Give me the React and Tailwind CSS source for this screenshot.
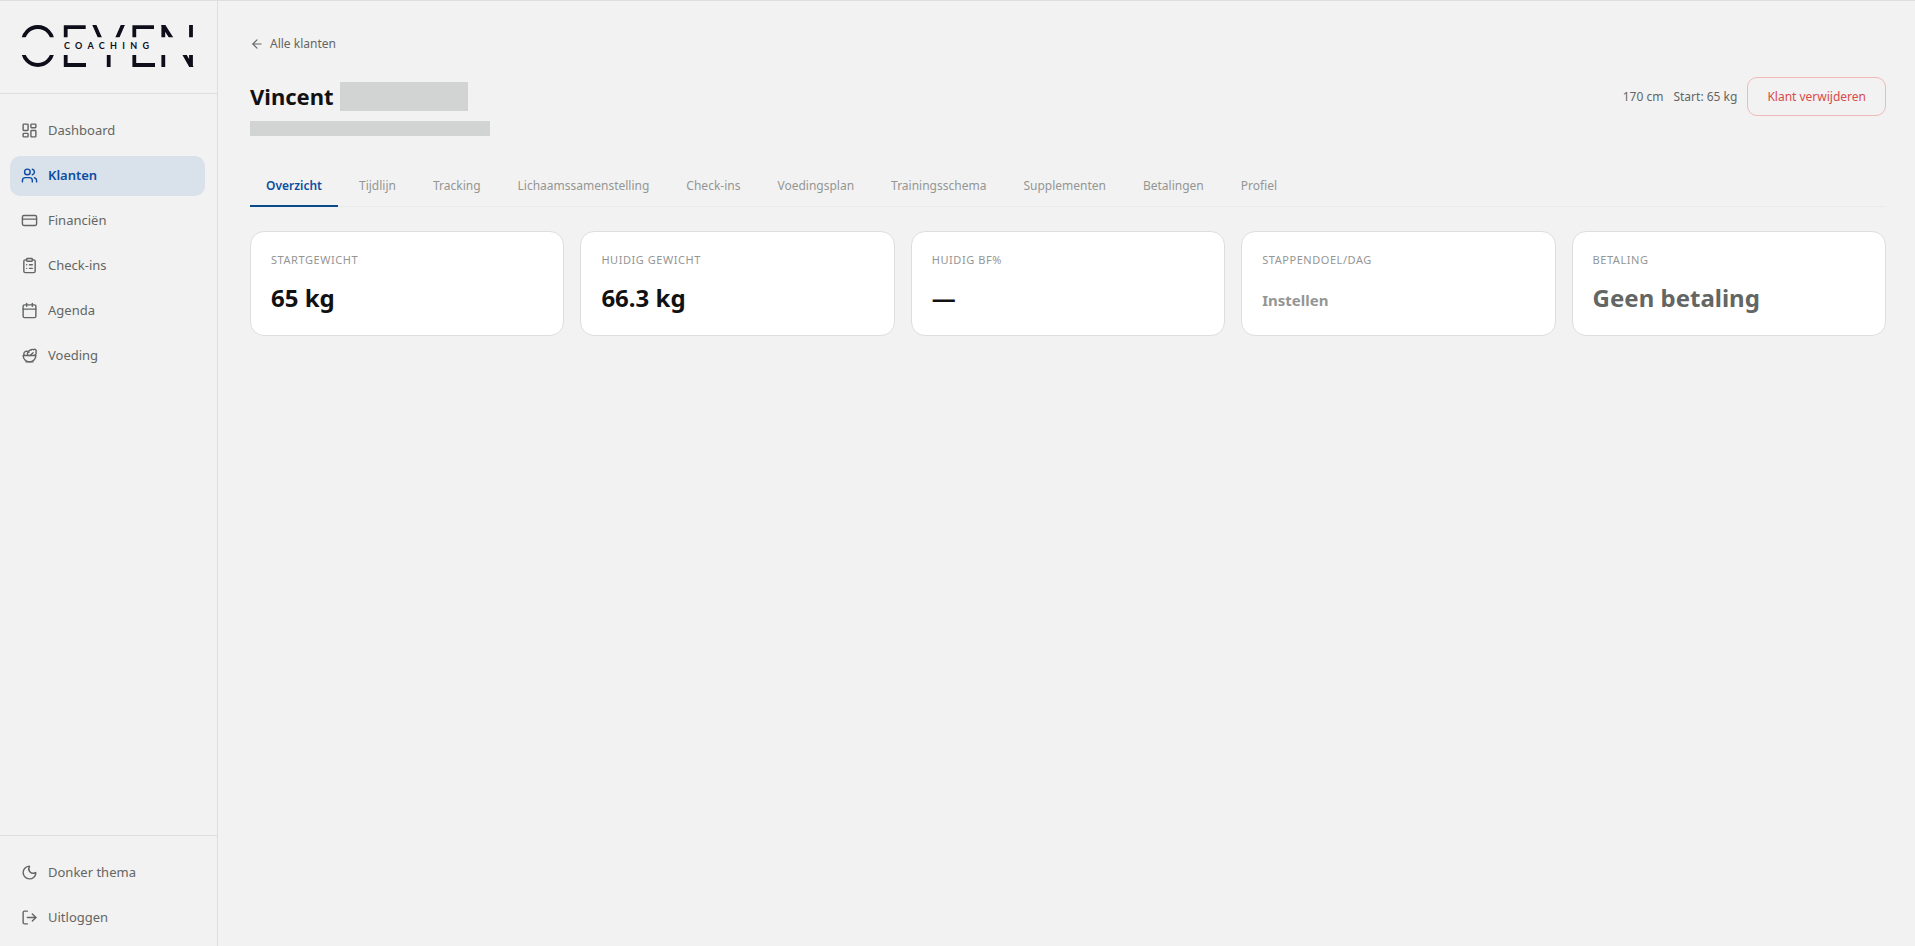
import React from 'react';
import {
  ArrowLeft,
  Calendar,
  ClipboardList,
  CreditCard,
  LayoutDashboard,
  LogOut,
  Moon,
  Salad,
  Users,
} from 'lucide-react';

const navItems = [
  { label: 'Dashboard', icon: LayoutDashboard },
  { label: 'Klanten', icon: Users, active: true },
  { label: 'Financiën', icon: CreditCard },
  { label: 'Check-ins', icon: ClipboardList },
  { label: 'Agenda', icon: Calendar },
  { label: 'Voeding', icon: Salad },
];

const tabs = [
  'Overzicht',
  'Tijdlijn',
  'Tracking',
  'Lichaamssamenstelling',
  'Check-ins',
  'Voedingsplan',
  'Trainingsschema',
  'Supplementen',
  'Betalingen',
  'Profiel',
];

const stats = [
  { label: 'Startgewicht', value: '65 kg' },
  { label: 'Huidig gewicht', value: '66.3 kg' },
  { label: 'Huidig BF%', value: '—' },
  { label: 'Stappendoel/dag', action: 'Instellen' },
  { label: 'Betaling', value: 'Geen betaling', muted: true },
];

const Logo = () => (
  <svg viewBox="0 0 176 44" className="block h-11 w-[176px]" role="img" aria-label="Oeyen Coaching">
    <clipPath id="logo-top">
      <rect x="0" y="1" width="176" height="12.3" />
    </clipPath>
    <clipPath id="logo-bottom">
      <rect x="0" y="31" width="176" height="12" />
    </clipPath>
    <g fill="none" stroke="#0e0e1a" strokeWidth="3.8" clipPath="url(#logo-top)">
      <circle cx="17.8" cy="17.8" r="14.8" />
      <path d="M45.7 14V3.2H65.7" />
      <path d="M73.5 -1L80.5 15M103.7 -1L96.7 15" />
      <path d="M114.3 14V3.2H134" />
      <path d="M143.3 14V0M142.5 0L152 15M171 14V0" />
    </g>
    <g fill="none" stroke="#0e0e1a" strokeWidth="3.8" clipPath="url(#logo-bottom)">
      <circle cx="17.8" cy="26.2" r="14.8" />
      <path d="M45.7 30V41H66M88.7 30V44" />
      <path d="M114.3 30V41H135" />
      <path d="M143.3 30V44M171 44V30M163.5 29L172 44" />
    </g>
    <text x="44" y="25" fontSize="9" fontWeight="700" letterSpacing="5.3" fill="#0e0e1a" fontFamily="Lato, sans-serif">
      COACHING
    </text>
  </svg>
);

const NavIcon = ({ icon: Icon }) => (
  <span className="pb-0.5">
    <Icon size={17} strokeWidth={2} />
  </span>
);

const NavItem = ({ label, icon, active }) => (
  <a
    href="#"
    aria-current={active ? 'page' : undefined}
    className={`flex h-10 items-center gap-2.5 rounded-[10px] px-[11px] ${
      active ? 'bg-[#d9e1ea] font-semibold text-[#0c4da2]' : 'text-[#636663]'
    }`}
  >
    <NavIcon icon={icon} />
    {label}
  </a>
);

const StatCard = ({ label, value, action, muted }) => (
  <div className="flex h-[105px] flex-col rounded-[14px] border border-[#dededd] bg-white px-5 pt-5">
    <div className="text-[11px] leading-4 tracking-wider text-[#949694] uppercase">{label}</div>
    {action ? (
      <button type="button" className="mt-5 self-start text-[15px] leading-6 font-bold text-[#949694]">
        {action}
      </button>
    ) : (
      <div className={`mt-3.5 text-2xl leading-8 font-bold ${muted ? 'text-[#636663]' : 'text-[#111111]'}`}>
        {value}
      </div>
    )}
  </div>
);

const App = () => {
  return (
    <div className="flex min-h-screen border-t border-[#dededd] bg-[#f2f2f2] font-['Noto_Sans','Open_Sans',sans-serif] text-[13px]">
      <aside className="flex w-[218px] shrink-0 flex-col border-r border-[#dededd]">
        <div className="border-b border-[#dededd] px-5 pt-[23px] pb-[25px]">
          <Logo />
        </div>
        <nav className="flex flex-1 flex-col gap-[5px] pt-[17px] pr-3 pl-2.5">
          {navItems.map((item) => (
            <NavItem key={item.label} {...item} />
          ))}
        </nav>
        <div className="flex flex-col gap-[5px] border-t border-[#dededd] pt-[17px] pr-3 pb-2 pl-2.5">
          <button type="button" className="flex h-10 items-center gap-2.5 px-[11px] text-[#636663]">
            <NavIcon icon={Moon} />
            Donker thema
          </button>
          <button type="button" className="flex h-10 items-center gap-2.5 px-[11px] text-[#636663]">
            <NavIcon icon={LogOut} />
            Uitloggen
          </button>
        </div>
      </aside>

      <main className="min-w-0 flex-1 pt-[33px] pr-[29px] pl-8">
        <a href="#" className="flex w-fit items-center gap-1.5 text-xs leading-5 text-[#636663]">
          <ArrowLeft size={14} strokeWidth={2} />
          Alle klanten
        </a>

        <header className="mt-[23px] flex items-start justify-between">
          <div>
            <h1 className="flex items-center gap-1.5 text-[22px] leading-[39px] font-bold text-[#111111]">
              Vincent
              <span className="h-[29px] w-32 bg-[#d2d4d3]" />
            </h1>
            <div className="mt-[5px] h-[15px] w-60 bg-[#d2d4d3]" />
          </div>
          <div className="flex items-center gap-2.5 text-xs text-[#636663]">
            <span>170 cm</span>
            <span>Start: 65 kg</span>
            <button type="button" className="h-[39px] rounded-[10px] border border-[#efb9b9] px-[19px] text-[#d94a4a]">
              Klant verwijderen
            </button>
          </div>
        </header>

        <div role="tablist" className="mt-[29px] flex gap-[5px] border-b border-[#ebebeb]">
          {tabs.map((tab, index) => (
            <button
              key={tab}
              type="button"
              role="tab"
              aria-selected={index === 0}
              className={`-mb-px h-[42px] border-b-2 px-4 pt-0.5 text-xs ${
                index === 0
                  ? 'border-[#0a4c8b] font-semibold text-[#0c4da2]'
                  : 'border-transparent text-[#949694]'
              }`}
            >
              {tab}
            </button>
          ))}
        </div>

        <section className="mt-6 grid grid-cols-5 gap-4">
          {stats.map((stat) => (
            <StatCard key={stat.label} {...stat} />
          ))}
        </section>
      </main>
    </div>
  );
};

export default App;
